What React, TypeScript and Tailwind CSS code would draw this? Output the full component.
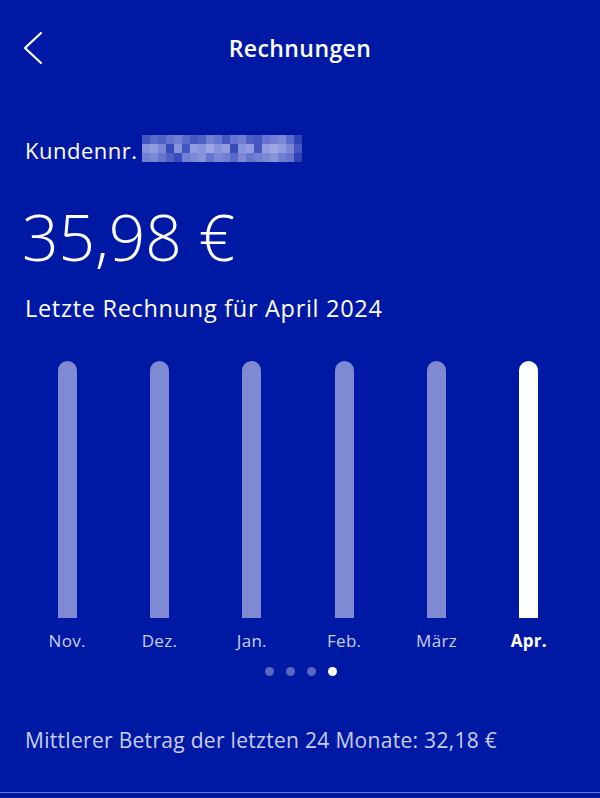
const months = [
  { label: 'Nov.', active: false },
  { label: 'Dez.', active: false },
  { label: 'Jan.', active: false },
  { label: 'Feb.', active: false },
  { label: 'März', active: false },
  { label: 'Apr.', active: true },
];

// blurred customer number, drawn as a pixel mosaic
const mosaic = [
  [0.3, 0.4, 0.35, 0.45, 0.5, 0.4, 0.3, 0.35, 0.5, 0.45, 0.3, 0.45, 0.5, 0.35, 0.3, 0.45, 0.5, 0.55, 0.4, 0.2],
  [0.6, 0.65, 0.55, 0.25, 0.6, 0.3, 0.65, 0.6, 0.7, 0.6, 0.65, 0.25, 0.6, 0.65, 0.3, 0.65, 0.7, 0.65, 0.55, 0.3],
  [0.5, 0.55, 0.45, 0.35, 0.25, 0.5, 0.55, 0.6, 0.45, 0.55, 0.5, 0.4, 0.55, 0.45, 0.5, 0.55, 0.6, 0.5, 0.45, 0.2],
];

function Mosaic() {
  return (
    <div className="mb-[5px] ml-[4px] flex flex-col">
      {mosaic.map((row, r) => (
        <div key={r} className="flex">
          {row.map((o, c) => (
            <div key={c} className="h-[9px] w-[8px]" style={{ backgroundColor: `rgba(225,228,255,${o})` }} />
          ))}
        </div>
      ))}
    </div>
  );
}

export default function App() {
  return (
    <div
      className="flex h-[798px] w-[600px] flex-col overflow-hidden bg-[#0019a5] text-white"
      style={{ fontFamily: '"Open Sans", "Noto Sans", sans-serif' }}
    >
      <header className="relative flex h-[96px] items-center justify-center">
        <svg className="absolute left-[22px] top-[31px]" width="22" height="34" viewBox="0 0 22 34" fill="none">
          <path d="M19 2 L3 17 L19 32" stroke="white" strokeWidth="2.2" strokeLinecap="round" strokeLinejoin="round" />
        </svg>
        <h1 className="text-[23px] font-semibold tracking-[0.4px]">Rechnungen</h1>
      </header>

      <div className="mt-[38px] flex items-center px-[25px]">
        <span className="text-[22px] font-medium tracking-[0.5px]">Kundennr.</span>
        <Mosaic />
      </div>

      <div className="mt-[38px] px-[22px] text-[64px] font-light leading-none">35,98 €</div>
      <div className="mt-[22px] px-[25px] text-[23.5px] font-medium tracking-[0.7px]">Letzte Rechnung für April 2024</div>

      <div className="mt-[35px] grid grid-cols-6 pl-[21px] pr-[25px]">
        {months.map((m) => (
          <div key={m.label} className="flex flex-col items-center">
            <div className={`h-[257px] w-[19px] rounded-t-full ${m.active ? 'bg-white' : 'bg-[#7f8ad2]'}`} />
            <span className={`mt-[10px] text-[17px] tracking-[0.3px] ${m.active ? 'font-bold text-white' : 'font-medium text-[#c9cdf0]'}`}>
              {m.label}
            </span>
          </div>
        ))}
      </div>

      <div className="mt-[13px] flex justify-center gap-[12px] pl-[1px]">
        <span className="h-[9px] w-[9px] rounded-full bg-[#5a66c4]" />
        <span className="h-[9px] w-[9px] rounded-full bg-[#5a66c4]" />
        <span className="h-[9px] w-[9px] rounded-full bg-[#5a66c4]" />
        <span className="h-[9px] w-[9px] rounded-full bg-white" />
      </div>

      <p className="mt-[49px] px-[25px] text-[21px] tracking-[0.3px] text-[#c9cdf0]">
        Mittlerer Betrag der letzten 24 Monate: 32,18 €
      </p>

      <div className="mt-auto h-[6px] border-t border-[#6c73c8] bg-[#0019a5]" />
    </div>
  );
}
